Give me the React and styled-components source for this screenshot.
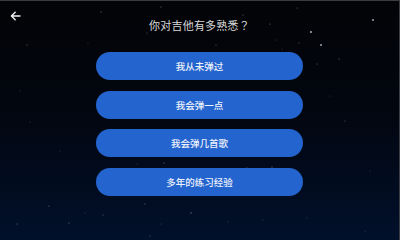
import React from "react";
import styled, { createGlobalStyle } from "styled-components";

const GlobalStyle = createGlobalStyle`
  html, body {
    margin: 0;
    padding: 0;
    background: #000;
  }
  * {
    box-sizing: border-box;
  }
`;

const stars = [
  [101, 11, 0.6], [27, 44, 0.6], [147, 32, 0.5], [161, 6, 0.6], [88, 42, 0.4],
  [311, 31, 1.1], [321, 44, 1], [373, 19, 1], [243, 14, 0.6], [270, 23, 0.6],
  [297, 7, 0.5], [339, 58, 0.6], [317, 63, 0.5], [216, 44, 0.5], [299, 42, 0.5],
  [276, 39, 0.4], [282, 48, 0.4], [49, 205, 0.6], [145, 203, 0.6], [191, 212, 0.7],
  [69, 222, 0.6], [17, 223, 0.6], [85, 212, 0.4], [103, 214, 0.5], [164, 162, 0.6],
  [247, 167, 0.6], [272, 166, 0.6], [307, 217, 0.4], [263, 219, 0.4], [150, 235, 0.5],
  [228, 221, 0.4], [161, 223, 0.4], [137, 163, 0.4], [30, 121, 0.4], [60, 150, 0.4],
  [345, 120, 0.5], [370, 170, 0.4], [330, 95, 0.4], [20, 90, 0.4], [365, 230, 0.4],
];

const Screen = styled.div`
  position: relative;
  width: 400px;
  height: 240px;
  overflow: hidden;
  background: linear-gradient(180deg, #030407 0%, #02060f 45%, #01102b 100%);
  border-top: 1px solid #3c3c3c;
  border-right: 1px solid #3a3d44;
  font-family: "Noto Sans CJK SC", "Noto Sans", sans-serif;
  display: flex;
  flex-direction: column;
`;

const Sky = styled.svg`
  position: absolute;
  inset: 0;
  pointer-events: none;
`;

const Header = styled.header`
  position: relative;
  height: 47px;
  display: grid;
  grid-template-columns: 40px 1fr 40px;
  align-items: center;
`;

const BackButton = styled.button`
  align-self: start;
  margin: 10px 0 0 10px;
  width: 11px;
  height: 10px;
  padding: 0;
  border: 0;
  background: none;
  color: #f2f2f2;
  display: flex;
  align-items: center;
  justify-content: center;
`;

const Title = styled.h1`
  margin: 0;
  text-align: center;
  font-family: "Noto Sans CJK TC", "Noto Sans CJK SC", sans-serif;
  font-size: 11px;
  font-weight: 400;
  letter-spacing: 0.2px;
  color: #dadada;
`;

const Options = styled.div`
  position: relative;
  display: flex;
  flex-direction: column;
  align-items: center;
  gap: 10.5px;
  padding-top: 4px;
`;

const Option = styled.button`
  width: 207px;
  height: 28px;
  border: 0;
  border-radius: 14px;
  background: #2464ce;
  color: #eef2fb;
  font-family: inherit;
  font-size: 9.5px;
  font-weight: 500;
  display: flex;
  align-items: center;
  justify-content: center;
  padding: 0;
`;

const options = ["我从未弹过", "我会弹一点", "我会弹几首歌", "多年的练习经验"];

export default function App() {
  return (
    <>
      <GlobalStyle />
      <Screen>
        <Sky width="400" height="240" viewBox="0 0 400 240">
          {stars.map(([x, y, r], i) => (
            <circle
              key={i}
              cx={x}
              cy={y}
              r={r}
              fill="#cfd6e4"
              opacity={r > 0.9 ? 0.75 : 0.5}
            />
          ))}
        </Sky>
        <Header>
          <BackButton aria-label="back">
            <svg width="11" height="10" viewBox="0 0 11 10" fill="none">
              <path
                d="M10 5H1.5M5.2 1.2L1.4 5l3.8 3.8"
                stroke="currentColor"
                strokeWidth="1.4"
                strokeLinecap="round"
                strokeLinejoin="round"
              />
            </svg>
          </BackButton>
          <Title>你对吉他有多熟悉？</Title>
          <span />
        </Header>
        <Options>
          {options.map((label) => (
            <Option key={label}>{label}</Option>
          ))}
        </Options>
      </Screen>
    </>
  );
}
